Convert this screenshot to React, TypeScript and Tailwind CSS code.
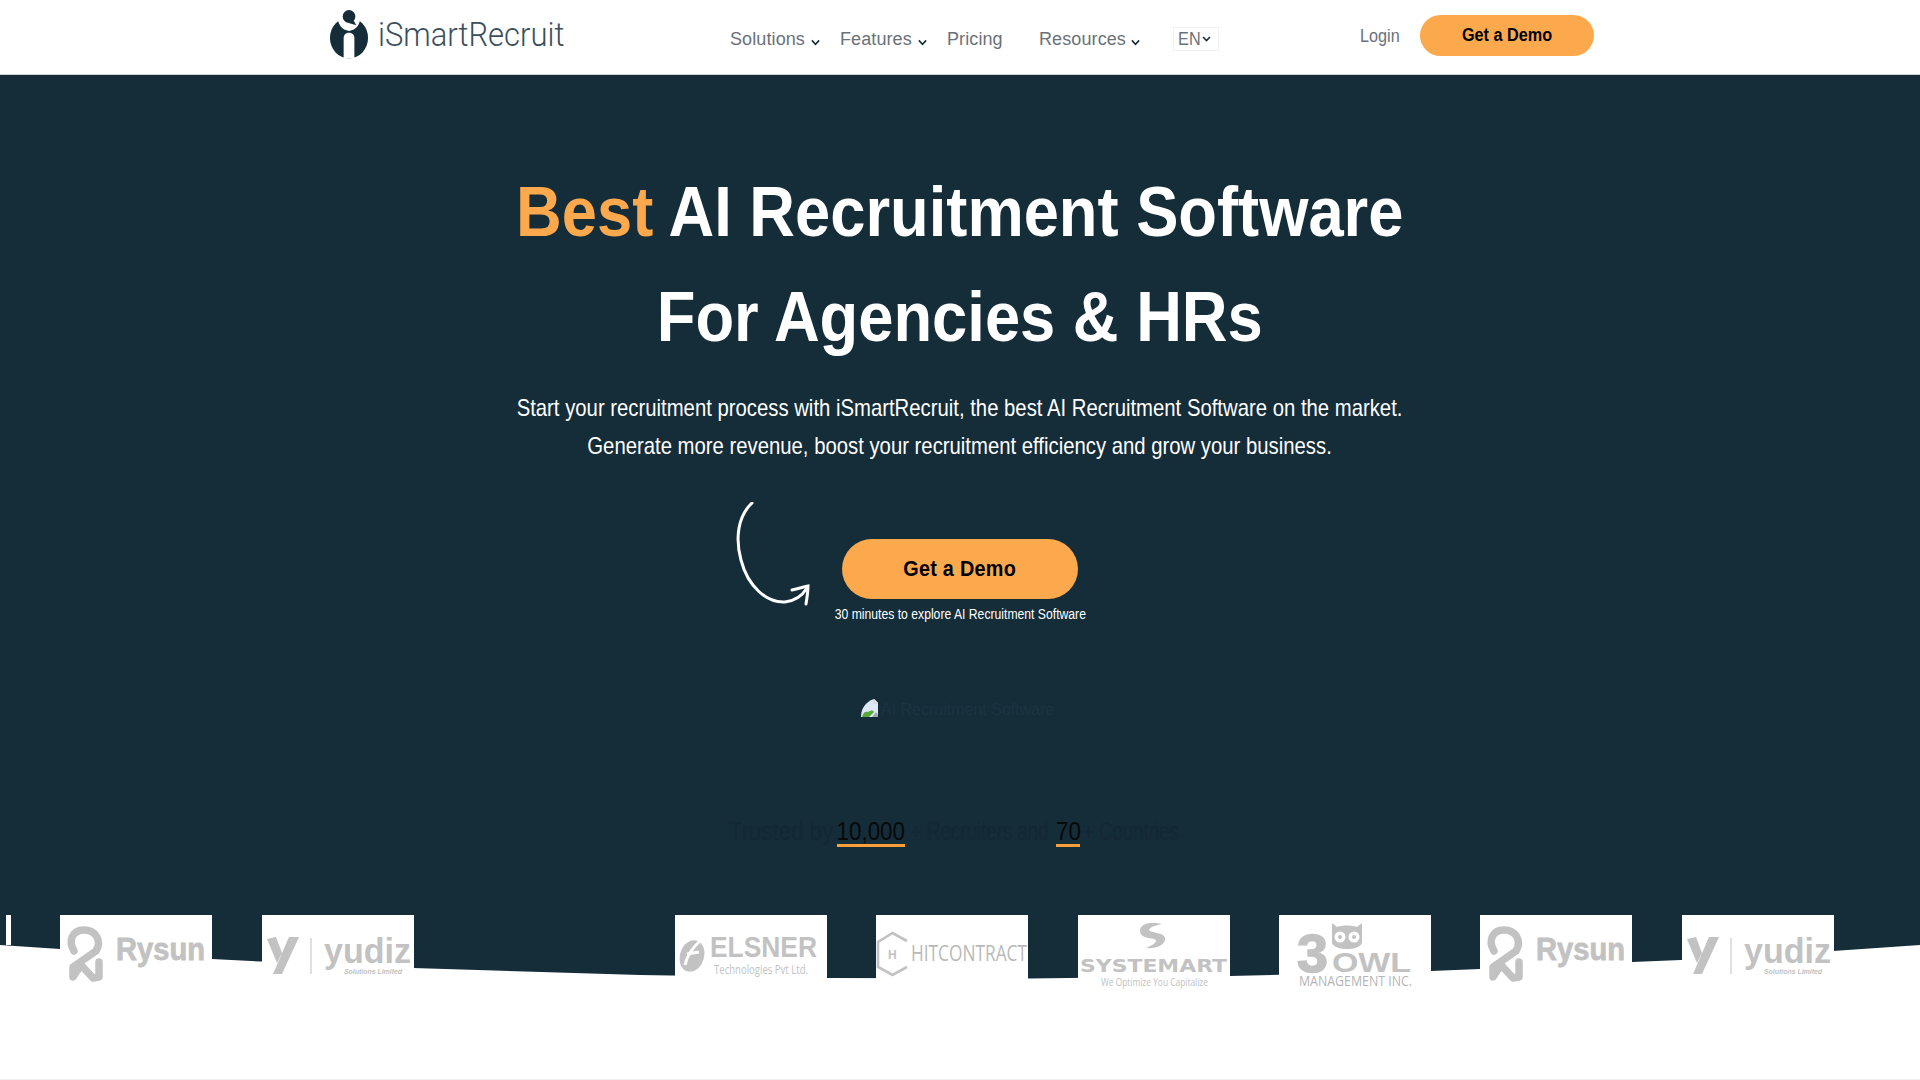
const sans = { fontFamily: '"Liberation Sans", Arial, sans-serif' };

function Chevron({ className }: { className: string }) {
  return (
    <svg viewBox="0 0 10 7" className={className} fill="none" stroke="#152c39" strokeWidth="1.8">
      <path d="M1 1.2 L5 5.4 L9 1.2" />
    </svg>
  );
}

function BrandMark() {
  return (
    <svg viewBox="0 0 40 50" className="w-[39px] h-[50px] shrink-0">
      <ellipse cx="19.5" cy="29" rx="19.5" ry="21" fill="#152c39" />
      <path d="M7 5 C9 18 12 20 19.5 22 C27 20 30 18 32 5 Z" fill="#fff" />
      <circle cx="19.5" cy="7" r="6.5" fill="#152c39" />
      <path d="M15 11 L24 11 L27 16 L20 14 Z" fill="#152c39" />
      <path d="M14 50 L14 29 C14 22 25 22 25 29 L25 50 Z" fill="#fff" />
    </svg>
  );
}

function Navbar() {
  return (
    <header className="h-[75px] bg-white border-b border-[#cfcfcf] flex items-start pl-[330px]" style={sans}>
      <div className="flex items-center mt-[9px]">
        <BrandMark />
        <span className="ml-[9px] text-[34px] leading-[50px] font-light text-[#3a4f5b] whitespace-nowrap w-[185px] scale-x-[0.91] origin-left" style={{ fontFamily: 'Roboto, sans-serif' }}>
          iSmartRecruit
        </span>
      </div>
      <nav className="flex items-center ml-[167px] mt-[27px] h-[24px] text-[18px] tracking-[0.1px] text-[#6a7178] whitespace-nowrap">
        <span className="w-[75px]">Solutions</span>
        <Chevron className="w-[9px] h-[7px] ml-[6px] mt-[6px]" />
        <span className="ml-[20px] w-[72px]">Features</span>
        <Chevron className="w-[9px] h-[7px] ml-[6px] mt-[6px]" />
        <span className="ml-[20px] w-[56px]">Pricing</span>
        <span className="ml-[36px] w-[86px]">Resources</span>
        <Chevron className="w-[9px] h-[7px] ml-[6px] mt-[6px]" />
        <span className="ml-[33px] w-[46px] h-[24px] border border-[#f0f0f0] flex items-center pl-[4px] gap-[2px]">
          <span className="inline-block origin-left scale-x-90 w-[22px]">EN</span>
          <Chevron className="w-[9px] h-[6px]" />
        </span>
      </nav>
      <span className="ml-[141px] mt-[24px] text-[18px] leading-[24px] text-[#6a7178] scale-x-90 origin-left w-[60px]">Login</span>
      <a className="mt-[15px] w-[174px] h-[41px] rounded-full bg-[#fba94c] flex items-center justify-center text-[18px] font-bold text-black">
        <span className="scale-x-90">Get a Demo</span>
      </a>
    </header>
  );
}

function CurvedArrow() {
  return (
    <svg viewBox="0 0 76 104" className="absolute left-[-107px] top-[-37px] w-[76px] h-[104px]" fill="none" stroke="#fff" strokeLinecap="round">
      <path d="M17 1 C3 14 0 36 6 58 C13 85 32 101 50 100 C59 99 67 94 72 86" strokeWidth="3" />
      <path d="M57 88 C62 87 68 85 73 84 C73 90 72 96 71 102" strokeWidth="3" />
    </svg>
  );
}

function BrokenImage() {
  return (
    <svg viewBox="0 0 17 18" className="w-[17px] h-[18px] shrink-0">
      <path d="M0 18 C0 10 4 3 13 0 L17 4 L17 18 Z" fill="#dfe8f7" />
      <path d="M1 18 C2 14 4 12 7 13 C10 11 12 11 13 13 L8 18 Z" fill="#58a83c" />
      <path d="M11 18 L15 13 L17 16 L17 18 Z" fill="#9fa8a8" />
      <path d="M13 0 L13 4 L17 4" fill="#fff" stroke="#b8bcc2" strokeWidth="0.8" />
    </svg>
  );
}

function Stats() {
  return (
    <div className="mt-[99px] self-start ml-[711px] h-[30px] text-[26px] leading-[30px] text-[#132834] whitespace-nowrap flex items-start">
      <span className="w-[126px] pr-[7px] text-right scale-x-[0.86] origin-right">Trusted by</span>
      <span className="w-[68px] relative text-[#07090a] flex justify-center">
        <span className="scale-x-[0.86]">10,000</span>
        <span className="absolute left-0 right-0 top-[28px] h-[3px] bg-[#fb9f3a]" />
      </span>
      <span className="w-[151px] pl-[8px] scale-x-[0.72] origin-left">+ Recruiters and</span>
      <span className="w-[24px] relative text-[#07090a] flex justify-center">
        <span className="scale-x-[0.86]">70</span>
        <span className="absolute left-0 right-0 top-[28px] h-[3px] bg-[#fb9f3a]" />
      </span>
      <span className="pl-[4px] scale-x-[0.72] origin-left">+ Countries</span>
    </div>
  );
}

function Hero() {
  return (
    <section className="flex flex-col items-center pt-[85px]" style={sans}>
      <h1 className="text-[70px] leading-[105px] font-bold text-white whitespace-nowrap text-center scale-x-[0.904]">
        <span className="block">
          <span className="text-[#fba94c]">Best</span> AI Recruitment Software
        </span>
        <span className="block">For Agencies &amp; HRs</span>
      </h1>
      <p className="mt-[19px] text-[24px] leading-[38px] text-white whitespace-nowrap text-center scale-x-[0.846]">
        <span className="block">Start your recruitment process with iSmartRecruit, the best AI Recruitment Software on the market.</span>
        <span className="block">Generate more revenue, boost your recruitment efficiency and grow your business.</span>
      </p>
      <div className="relative mt-[74px]">
        <CurvedArrow />
        <a className="w-[236px] h-[60px] rounded-full bg-[#fba94c] flex items-center justify-center text-[22px] font-bold text-black pb-[2px]">
          <span className="scale-x-90 tracking-[0.3px]">Get a Demo</span>
        </a>
      </div>
      <p className="mt-[5px] text-[14px] leading-[20px] text-white whitespace-nowrap scale-x-[0.87]">30 minutes to explore AI Recruitment Software</p>
      <div className="mt-[75px] self-start ml-[861px] h-[18px] flex items-end">
        <BrokenImage />
        <span className="ml-[3px] text-[16px] leading-[14px] text-[#1b3441] whitespace-nowrap">AI Recruitment Software</span>
      </div>
      <Stats />
    </section>
  );
}

const G = '#c2c2c2';
const logoFont = '"Liberation Sans", Arial, sans-serif';
const lightFont = '"Open Sans", sans-serif';

function Box({ children }: { children: React.ReactNode }) {
  return (
    <svg viewBox="0 0 152 75" className="w-[152px] h-[75px] shrink-0 bg-white">
      {children}
    </svg>
  );
}

function Rysun() {
  return (
    <Box>
      <path d="M14 36 C8 26 12 15 24 15 C36 15 42 26 36 36 L13 52 L13 62 L21 50 L33 63 L39 62 L39 47" fill="none" stroke={G} strokeWidth="7.5" strokeLinejoin="round" strokeLinecap="round" />
      <text x="56" y="45" fontFamily={logoFont} fontWeight="700" fontSize="31" fill={G} stroke={G} strokeWidth="0.8" textLength="89" lengthAdjust="spacingAndGlyphs">Rysun</text>
    </Box>
  );
}

function Yudiz() {
  return (
    <Box>
      <path d="M5 24 L14 22 L20 38 L15 48 Z" fill={G} />
      <path d="M27 22 L37 22 L20 59 L11 59 Z" fill={G} />
      <path d="M49 23 L49 59" stroke={G} strokeWidth="1" />
      <text x="62" y="48" fontFamily={logoFont} fontWeight="700" fontSize="35" fill={G} textLength="87" lengthAdjust="spacingAndGlyphs">yudiz</text>
      <text x="82" y="59" fontFamily={logoFont} fontWeight="700" fontStyle="italic" fontSize="8" fill={G} textLength="58" lengthAdjust="spacingAndGlyphs">Solutions Limited</text>
    </Box>
  );
}

function Elsner() {
  return (
    <Box>
      <ellipse cx="17" cy="41" rx="12" ry="16" fill={G} transform="rotate(18 17 41)" />
      <path d="M10 50 C12 40 18 32 27 24 M12 39 L24 37" stroke="#fff" strokeWidth="3" fill="none" />
      <text x="35" y="42" fontFamily={logoFont} fontWeight="700" fontSize="29" fill={G} textLength="107" lengthAdjust="spacingAndGlyphs">ELSNER</text>
      <text x="39" y="59" fontFamily={lightFont} fontSize="12" fill={G} textLength="94" lengthAdjust="spacingAndGlyphs">Technologies Pvt Ltd.</text>
    </Box>
  );
}

function Hit() {
  return (
    <Box>
      <path d="M31 26 L16.500 18 L2 27 L2 52 L16.500 60 L31 52" fill="none" stroke={G} strokeWidth="2.600" />
      <text x="12" y="44" fontFamily={logoFont} fontWeight="700" fontSize="12" fill={G}>H</text>
      <text x="35" y="46" fontFamily={lightFont} fontSize="21" fill="#b9b9b9" textLength="116" lengthAdjust="spacingAndGlyphs">HITCONTRACT</text>
    </Box>
  );
}

function Systemart() {
  return (
    <Box>
      <path d="M84 9 C72 6 62 9 62 16 C62 22 70 23 76 24 C80 25 78 29 68 33 C78 34 88 30 87 23 C86 18 76 18 72 16 C69 14 74 11 84 9 Z" fill={G} />
      <text x="2" y="57" fontFamily="'DejaVu Sans', sans-serif" fontWeight="700" fontSize="18" fill={G} textLength="147" lengthAdjust="spacingAndGlyphs">SYSTEMART</text>
      <text x="23" y="71" fontFamily={lightFont} fontSize="11" fill={G} textLength="107" lengthAdjust="spacingAndGlyphs">We Optimize You Capitalize</text>
    </Box>
  );
}

function Owl() {
  return (
    <Box>
      <text x="18" y="57" fontFamily={logoFont} fontWeight="700" fontSize="53" fill={G} stroke={G} strokeWidth="1.5" textLength="31" lengthAdjust="spacingAndGlyphs">3</text>
      <path d="M53 8 L58 12 C63 10 73 10 78 12 L83 8 L83 28 C80 36 56 36 53 28 Z" fill={G} />
      <circle cx="61" cy="22" r="5.500" fill="#fff" />
      <circle cx="75" cy="22" r="5.500" fill="#fff" />
      <circle cx="61" cy="22" r="2" fill={G} />
      <circle cx="75" cy="22" r="2" fill={G} />
      <text x="53" y="57" fontFamily={logoFont} fontWeight="700" fontSize="28" fill={G} textLength="79" lengthAdjust="spacingAndGlyphs">OWL</text>
      <text x="20" y="71" fontFamily={lightFont} fontSize="14" fill="#b5b5b5" textLength="113" lengthAdjust="spacingAndGlyphs">MANAGEMENT INC.</text>
    </Box>
  );
}

function LogoStrip() {
  return (
    <div className="relative z-10 flex items-start gap-[49.3px] pl-[6px] h-[75px] overflow-hidden">
      <div className="w-[5px] h-[30px] bg-white shrink-0" />
      <Rysun />
      <Yudiz />
      <div className="w-[163px] shrink-0" />
      <Elsner />
      <Hit />
      <Systemart />
      <Owl />
      <Rysun />
      <Yudiz />
    </div>
  );
}

export default function App() {
  return (
    <div className="w-[1920px] h-[1080px] overflow-hidden bg-white flex flex-col">
      <Navbar />
      <main className="relative flex-1 bg-[#152c39] flex flex-col justify-between">
        <Hero />
        <div className="mb-[90px]">
          <LogoStrip />
        </div>
        <svg viewBox="0 0 1920 135" preserveAspectRatio="none" className="absolute left-0 bottom-0 w-[1920px] h-[135px]">
          <path d="M0 0 L60 4 L212 14 L261 16.5 L413 23 L640 30 L827 33 L1029 33.5 L1230 31 L1431 26 L1480 24 L1632 17 L1681 15 L1833 6 L1920 0 L1920 135 L0 135 Z" fill="#fff" />
          <rect x="0" y="134" width="1920" height="1" fill="#f0f0f0" />
        </svg>
      </main>
    </div>
  );
}
